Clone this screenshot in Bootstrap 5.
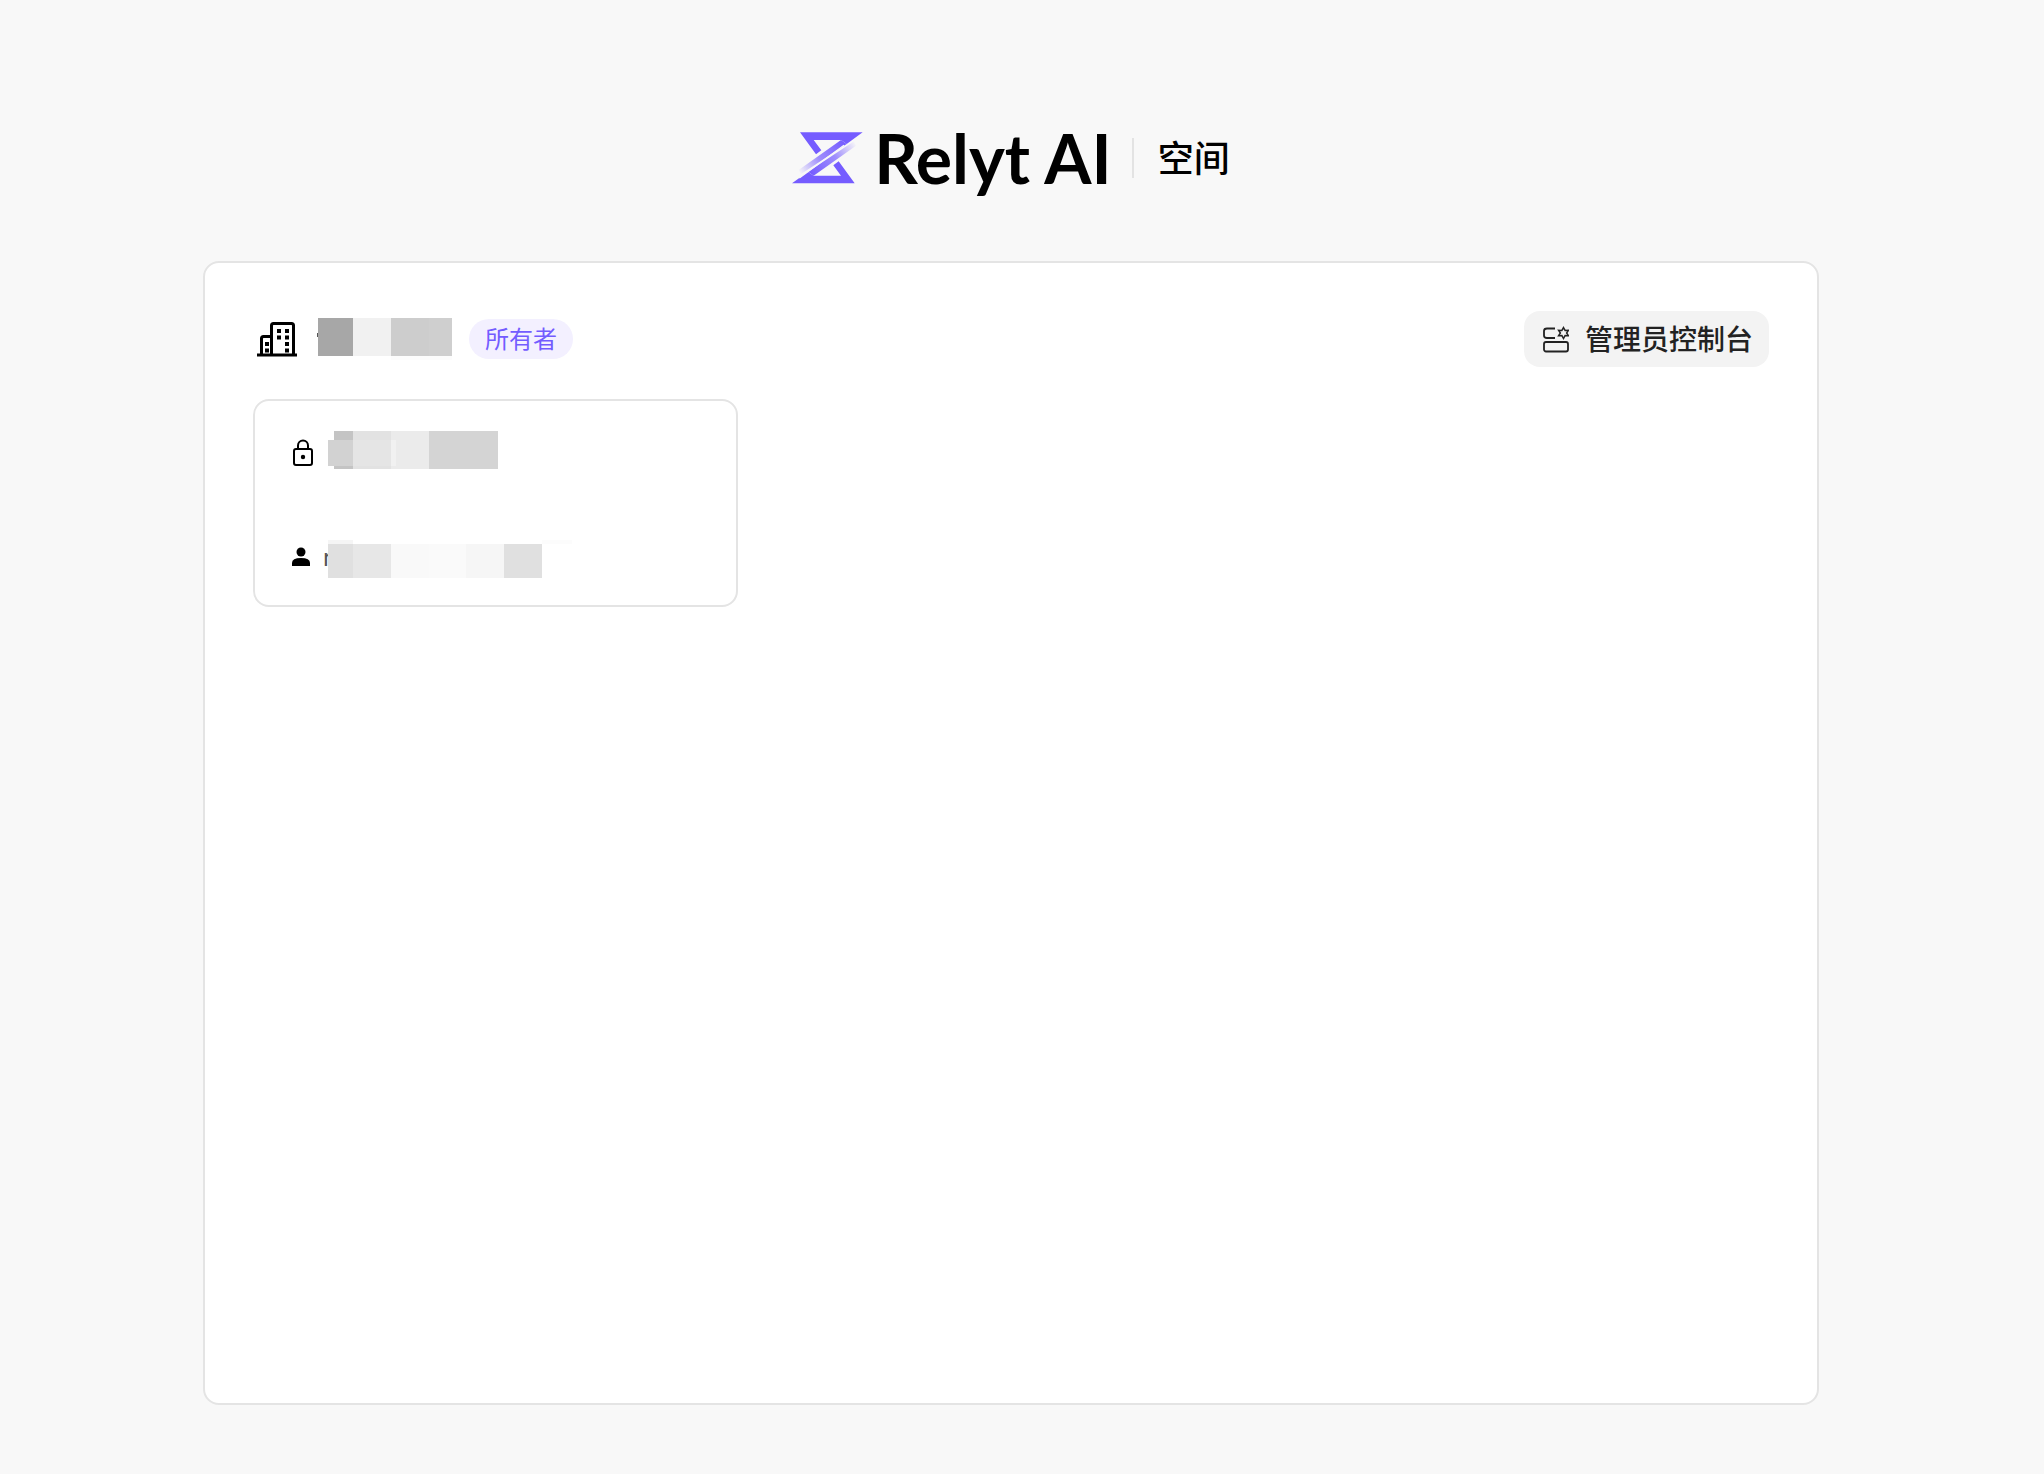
<!DOCTYPE html>
<html lang="zh-CN">
<head>
<meta charset="utf-8">
<meta name="viewport" content="width=device-width, initial-scale=1">
<title>Relyt AI 空间</title>
<link href="https://cdn.jsdelivr.net/npm/bootstrap@5.3.0/dist/css/bootstrap.min.css" rel="stylesheet">
<style>
body { background: #f8f8f8; color: #000; font-family: "Noto Sans CJK SC", sans-serif; }
.page-shell { padding: 124px 22px 69px 0; }
.brand-bar { height: 68px; margin-bottom: 69px; }
.brand-word { font: 700 68px/68px Lato, sans-serif; margin-left: 10px; }
.brand-rule { width: 2px; height: 40px; background: #e3e3e3; margin: 0 24px 0 20px; }
.brand-title { font-size: 36px; font-weight: 500; line-height: 64px; margin: 0; padding-bottom: 4px; }
.space-panel { width: 80%; max-width: 1616px; border: 2px solid #e4e4e4; border-radius: 16px; padding: 48px; }
.org-row { margin-bottom: 32px; }
.role-pill { background: #f3f0ff; color: #735cff; font-size: 24px; font-weight: 400; line-height: 38px; padding: 0 16px 2px; border-radius: 20px; margin-left: 17px; }
.console-btn { --bs-btn-bg: #f3f3f3; --bs-btn-color: #222; --bs-btn-border-width: 0; --bs-btn-hover-bg: #eaeaea; --bs-btn-border-radius: 16px; --bs-btn-padding-x: 16px; --bs-btn-padding-y: 0; font-size: 28px; font-weight: 500; line-height: 54px; height: 56px; }
.console-btn span { padding-bottom: 2px; }
.space-card { width: 32%; min-width: 484px; height: 208px; border: 2px solid #e4e4e4; border-radius: 16px; padding: 30px 34px 27px; color: #000; }
.owner-text { font: 400 24px/36px Inter, sans-serif; color: #555; left: 0; top: 0; }
.owner-mask { left: 5px; top: 0; }
</style>
<script src="https://cdn.jsdelivr.net/npm/bootstrap@5.3.0/dist/js/bootstrap.bundle.min.js"></script>
</head>
<body>
<div class="page-shell min-vh-100 d-flex flex-column align-items-center">
  <header class="brand-bar d-flex align-items-center justify-content-center">
    <svg width="72" height="52" viewBox="40 66 216 156" aria-hidden="true">
      <defs>
        <linearGradient id="fadeDown" gradientUnits="userSpaceOnUse" x1="196" y1="96" x2="62" y2="190"><stop stop-color="#755cff"/><stop offset=".55" stop-color="#755cff" stop-opacity=".68"/><stop offset="1" stop-color="#755cff" stop-opacity="0"/></linearGradient>
        <linearGradient id="fadeUp" gradientUnits="userSpaceOnUse" x1="96" y1="191" x2="230" y2="97"><stop stop-color="#755cff"/><stop offset=".55" stop-color="#755cff" stop-opacity=".68"/><stop offset="1" stop-color="#755cff" stop-opacity="0"/></linearGradient>
      </defs>
      <path fill="#755cff" d="M64 67H252L204 102 187 90H105L128 121 112 133ZM228 220H40L88 185 105 197H187L164 166 180 154Z"/>
      <path fill="url(#fadeDown)" d="M187 90L204 102 66 193 60 180Z"/>
      <path fill="url(#fadeUp)" d="M105 197L88 185 226 94 232 107Z"/>
      <path stroke="#f8f8f8" stroke-width="4" d="M62 204L196 106"/>
    </svg>
    <span class="brand-word">Relyt AI</span>
    <span class="brand-rule"></span>
    <h1 class="brand-title">空间</h1>
  </header>

  <main class="space-panel bg-white flex-grow-1">
    <div class="org-row d-flex align-items-center justify-content-between">
      <div class="d-flex align-items-center">
        <svg width="48" height="48" viewBox="0 3 48 48" aria-hidden="true">
          <g fill="none" stroke="#000" stroke-width="3" stroke-linejoin="round"><path d="M18.500 42V13.500q0-2 2-2h18q2 0 2 2V42M18.500 24.500H10.500q-2 0-2 2V42"/><path d="M4 43H44"/></g>
          <path d="M24 17h4v4h-4zM32 17h4v4h-4zM24 23.500h4v4h-4zM32 23.500h4v4h-4zM32 30h4v4h-4zM32 36.500h4v4h-4zM12 30h4v4h-4zM12 36.500h4v4h-4z"/>
        </svg>
        <svg width="151" height="56" viewBox="0 0 151 56" shape-rendering="crispEdges" role="img" aria-label="已隐藏的组织名称">
          <path fill="#555" d="M16 22h2v4h-2z"/><path fill="#a7a7a7" d="M17 7h35v38H17z"/><path fill="#f1f1f1" d="M52 7h38v38H52z"/><path fill="#cdcdcd" d="M90 7h38v38H90z"/><path fill="#cfcfcf" d="M128 7h23v38h-23z"/><path fill="#fcfcfc" d="M90 45h61v4H90z"/>
        </svg>
        <span class="role-pill">所有者</span>
      </div>
      <button type="button" class="btn console-btn d-flex align-items-center gap-3">
        <svg width="29" height="28" viewBox="0 0 29 28" fill="none" stroke="#222" stroke-width="1.800" aria-hidden="true">
          <path d="M15 3.500H7Q4 3.500 4 6v4.500q0 2.500 3 2.500h8"/><rect x="4" y="17" width="24" height="9.500" rx="2"/>
          <path stroke-width="1.500" d="M23.500 2.500l1.600 2.900 3.300-.1L26.600 8l1.800 2.700-3.300-.1L23.500 13.500l-1.600-2.900-3.300.1L20.400 8l-1.800-2.700 3.300.1z"/>
        </svg>
        <span>管理员控制台</span>
      </button>
    </div>

    <a href="#" class="space-card d-flex flex-column justify-content-between text-decoration-none">
      <div class="d-flex">
        <svg width="39" height="40" viewBox="0 0 39 40" fill="none" stroke="#000" stroke-width="2" aria-hidden="true"><rect x="5" y="18" width="18" height="16" rx="2"/><path d="M9 18v-3.500a5 5 0 0 1 10 0V18"/><circle cx="14" cy="26" r="2.200" fill="#000" stroke="none"/></svg>
        <svg width="171" height="40" viewBox="0 0 171 40" shape-rendering="crispEdges" role="img" aria-label="已隐藏的空间名称">
          <path fill="#c4c4c4" d="M6 0h19v38H6z"/><path fill="#e2e2e2" d="M25 0h38v38H25z"/><path fill="#ebebeb" d="M63 0h38v38H63z"/><path fill="#d4d4d4" d="M101 0h69v38h-69z"/><path fill="#d2d2d2" d="M0 9h25v26H0z"/><path fill="#e5e5e5" d="M25 9h38v26H25z"/><path fill="#f1f1f1" d="M63 9h5v26h-5z"/>
        </svg>
      </div>
      <div class="d-flex">
        <svg width="34" height="38" viewBox="0 0 34 38" aria-hidden="true"><circle cx="12" cy="12" r="4.500"/><path d="M3 26v-3q0-5 9-5t9 5v3z"/></svg>
        <div class="position-relative">
          <span class="owner-text position-absolute">r</span>
          <svg class="owner-mask position-absolute" width="245" height="38" viewBox="0 0 245 38" shape-rendering="crispEdges" role="img" aria-label="已隐藏的所有者">
            <path fill="#f5f5f5" d="M0 0h25v4H0z"/><path fill="#fcfcfc" d="M214 0h30v4h-30z"/><path fill="#e0e0e0" d="M0 4h25v34H0z"/><path fill="#e7e7e7" d="M25 4h38v34H25z"/><path fill="#f9f9f9" d="M63 4h38v34H63z"/><path fill="#fafafa" d="M101 4h37v34h-37z"/><path fill="#f6f6f6" d="M138 4h38v34h-38z"/><path fill="#e0e0e0" d="M176 4h38v34h-38z"/>
          </svg>
        </div>
      </div>
    </a>
  </main>
</div>
</body>
</html>
